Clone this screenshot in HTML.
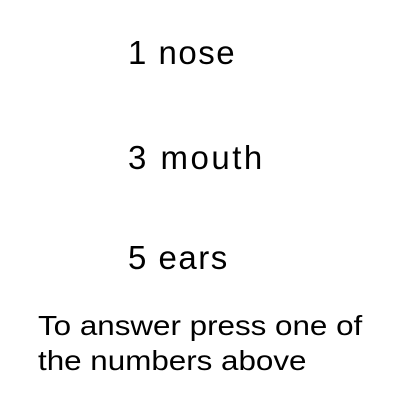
<!DOCTYPE html>
<html><head><style>
html,body{margin:0;padding:0;background:#fff;width:400px;height:400px;overflow:hidden}
div{position:absolute;font-family:"Liberation Sans",sans-serif;color:#000;white-space:nowrap;transform-origin:0 0}
.big{font-size:33px;left:128px;letter-spacing:1.5px}
.small{font-size:28px;left:38px;transform:scaleX(1.12)}
</style></head><body>
<div class="big" style="top:34px">1 nose</div>
<div class="big" style="top:139px;letter-spacing:2.5px">3 mouth</div>
<div class="big" style="top:239px">5 ears</div>
<div class="small" style="top:310px">To answer press one of</div>
<div class="small" style="top:345px">the numbers above</div>
</body></html>
